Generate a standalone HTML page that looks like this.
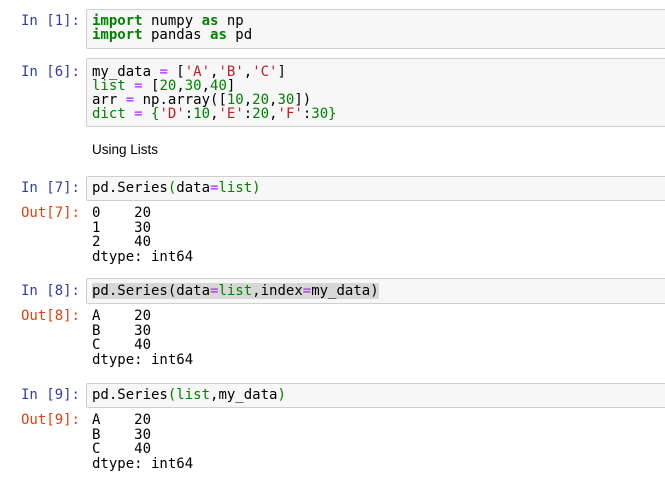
<!DOCTYPE html>
<html><head><meta charset="utf-8"><style>
body{margin:0;width:665px;height:481px;background:#fff;position:relative;overflow:hidden;font-family:"DejaVu Sans Mono","Liberation Mono",monospace;font-size:14px;}
.box{position:absolute;left:86px;width:590px;background:#f7f7f7;border:1px solid #cfcfcf;border-radius:2px;}
.t{position:absolute;left:92px;line-height:14px;white-space:pre;color:#000;}
.o{line-height:14.5px;}
.lab{position:absolute;right:585px;line-height:14px;white-space:pre;}
.in{color:#303f9f}.out{color:#d84315}
.k{color:#008000;font-weight:bold}.s{color:#ba2121}.p{color:#aa22ff}.g{color:#008000}
.hl{background:#d7d7d7}
</style></head><body>
<div class="box" style="top:9px;height:38px"></div>
<div class="lab in" style="top:14px">In [1]:</div>
<div class="t" style="top:14px"><span class="k">import</span> numpy <span class="k">as</span> np
<span class="k">import</span> pandas <span class="k">as</span> pd</div>

<div class="box" style="top:58px;height:67px"></div>
<div class="lab in" style="top:65px">In [6]:</div>
<div class="t" style="top:65px">my_data <span class="p">=</span> [<span class="s">'A'</span>,<span class="s">'B'</span>,<span class="s">'C'</span>]
<span class="g">list</span> <span class="p">=</span> [<span class="g">20</span>,<span class="g">30</span>,<span class="g">40</span>]
arr <span class="p">=</span> np.array([<span class="g">10</span>,<span class="g">20</span>,<span class="g">30</span>])
<span class="g">dict</span> <span class="p">=</span> <span class="g">{</span><span class="s">'D'</span>:<span class="g">10</span>,<span class="s">'E'</span>:<span class="g">20</span>,<span class="s">'F'</span>:<span class="g">30</span><span class="g">}</span></div>

<div style="position:absolute;left:92px;top:142px;font-family:'Liberation Sans',sans-serif;font-size:13.5px;line-height:16px;color:#000">Using Lists</div>

<div class="box" style="top:176px;height:23px"></div>
<div class="lab in" style="top:181px">In [7]:</div>
<div class="t" style="top:181px">pd.Series<span class="g">(</span>data<span class="p">=</span><span class="g">list</span><span class="g">)</span></div>
<div class="lab out" style="top:206px">Out[7]:</div>
<div class="t o" style="top:206px">0    20
1    30
2    40
dtype: int64</div>

<div class="box" style="top:278px;height:24px"></div>
<div class="lab in" style="top:284px">In [8]:</div>
<div class="t" style="top:284px"><span class="hl">pd.Series(data<span class="p">=</span><span class="g">list</span>,index<span class="p">=</span>my_data)</span></div>
<div class="lab out" style="top:309px">Out[8]:</div>
<div class="t o" style="top:309px">A    20
B    30
C    40
dtype: int64</div>

<div class="box" style="top:383px;height:23px"></div>
<div class="lab in" style="top:388px">In [9]:</div>
<div class="t" style="top:388px">pd.Series<span class="g">(</span><span class="g">list</span>,my_data<span class="g">)</span></div>
<div class="lab out" style="top:413px">Out[9]:</div>
<div class="t o" style="top:413px">A    20
B    30
C    40
dtype: int64</div>
</body></html>
